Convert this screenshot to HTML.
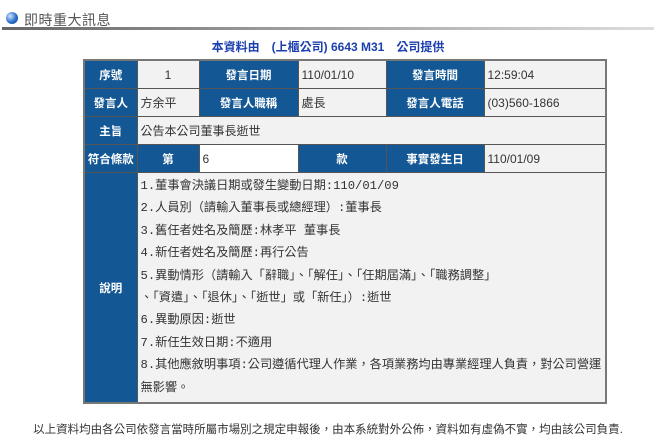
<!DOCTYPE html>
<html><head><meta charset="utf-8"><style>
body{margin:0;width:656px;height:440px;background:#fff;font-family:"Liberation Sans","Noto Sans CJK TC",sans-serif;position:relative;overflow:hidden}
.hd{position:absolute;left:4px;top:9px;height:20px;width:650px}
.hd .t{position:absolute;left:20px;top:1px;font-size:14px;color:#555;letter-spacing:0.5px}
.hd .ic{position:absolute;left:2px;top:3px;width:12px;height:12px;border-radius:50%;background:radial-gradient(circle at 35% 35%,#cfe6ff,#2a6fc9 55%,#123f80)}
.line{position:absolute;left:2px;top:27px;width:652px;height:3px;background:linear-gradient(90deg,#666,#999 40%,#ddd)}
.sub{position:absolute;left:0;width:656px;top:38px;text-align:center;font-size:12px;font-weight:bold;color:#1c3fae}
table{position:absolute;left:83px;top:59px;border-collapse:collapse;border:2px solid #777;width:522px;table-layout:fixed}
td{border:1px solid #555;font-size:12px;color:#333;background:#f2f2f2;padding:0 3px;height:27px;white-space:nowrap;overflow:hidden}
td.b{background:#135794;color:#fff;font-weight:bold;text-align:center;padding:0;font-size:11.5px}
td.c{text-align:center}
td.w{background:#fff}
.desc{font-family:"Liberation Mono","Noto Sans CJK TC",monospace;font-size:12.2px;line-height:22.4px;padding:2px 0 3px 3px;color:#333;vertical-align:top;letter-spacing:0}
.foot{position:absolute;left:0;width:656px;top:421px;text-align:center;font-size:11.5px;color:#333}
</style></head><body>
<div class="hd"><div class="ic"></div><div class="t">即時重大訊息</div></div>
<div class="line"></div>
<div class="sub">本資料由　(上櫃公司) 6643 M31　公司提供</div>
<table>
<colgroup><col style="width:53px"><col style="width:62px"><col style="width:99px"><col style="width:88px"><col style="width:98px"><col style="width:122px"></colgroup>
<tr><td class="b">序號</td><td class="c">1</td><td class="b">發言日期</td><td>110/01/10</td><td class="b">發言時間</td><td>12:59:04</td></tr>
<tr><td class="b">發言人</td><td>方余平</td><td class="b">發言人職稱</td><td>處長</td><td class="b">發言人電話</td><td>(03)560-1866</td></tr>
<tr><td class="b">主旨</td><td colspan="5">公告本公司董事長逝世</td></tr>
<tr><td class="b">符合條款</td><td class="b">第</td><td class="w">6</td><td class="b">款</td><td class="b">事實發生日</td><td>110/01/09</td></tr>
<tr><td class="b">說明</td><td colspan="5" class="desc">1.董事會決議日期或發生變動日期:110/01/09<br>2.人員別（請輸入董事長或總經理）:董事長<br>3.舊任者姓名及簡歷:林孝平 董事長<br>4.新任者姓名及簡歷:再行公告<br>5.異動情形（請輸入「辭職」、「解任」、「任期屆滿」、「職務調整」<br>、「資遣」、「退休」、「逝世」或「新任」）:逝世<br>6.異動原因:逝世<br>7.新任生效日期:不適用<br>8.其他應敘明事項:公司遵循代理人作業，各項業務均由專業經理人負責，對公司營運<br>無影響。</td></tr>
</table>
<div class="foot">以上資料均由各公司依發言當時所屬市場別之規定申報後，由本系統對外公佈，資料如有虛偽不實，均由該公司負責.</div>
</body></html>
